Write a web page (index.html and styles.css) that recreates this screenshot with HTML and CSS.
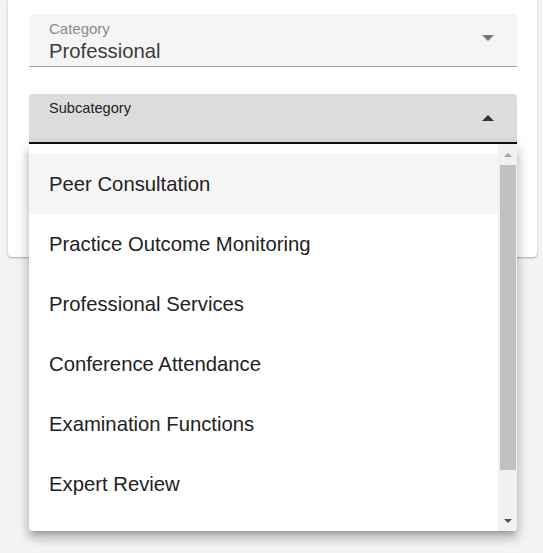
FILE: index.html
```html
<!DOCTYPE html>
<html>
<head>
<meta charset="utf-8">
<link rel="stylesheet" href="styles.css">
</head>
<body>
<div class="card">
  <div class="field field-filled">
    <div class="field-text">
      <div class="label">Category</div>
      <div class="value">Professional</div>
    </div>
    <span class="arrow arrow-down"></span>
  </div>
  <div class="field field-open">
    <div class="field-text">
      <div class="label label-open">Subcategory</div>
    </div>
    <span class="arrow arrow-up"></span>
    <div class="menu">
      <ul class="list">
        <li class="item item-active">Peer Consultation</li>
        <li class="item">Practice Outcome Monitoring</li>
        <li class="item">Professional Services</li>
        <li class="item">Conference Attendance</li>
        <li class="item">Examination Functions</li>
        <li class="item">Expert Review</li>
      </ul>
      <div class="scrollbar">
        <span class="sb-btn"><span class="sb-up"></span></span>
        <div class="sb-thumb"></div>
        <div class="sb-rest"></div>
        <span class="sb-btn"><span class="sb-down"></span></span>
      </div>
    </div>
  </div>
</div>
</body>
</html>
```
FILE: styles.css
```css
html, body {
  margin: 0;
  padding: 0;
}
body {
  background: #f4f4f4;
  font-family: "Liberation Sans", Arial, sans-serif;
  height: 553px;
  overflow: hidden;
}
.card {
  margin: 0 6px 0 8px;
  height: 257px;
  box-sizing: border-box;
  background: #fff;
  border-radius: 0 0 4px 4px;
  box-shadow: 0 1px 3px rgba(0,0,0,0.2), 0 1px 1px rgba(0,0,0,0.12);
  padding: 14px 20px 0 21px;
  display: flex;
  flex-direction: column;
  gap: 27px;
}
.field {
  position: relative;
  display: flex;
  align-items: flex-start;
  border-radius: 4px 4px 0 0;
  padding: 0 20px;
  box-sizing: border-box;
}
.field-filled {
  background: #f5f5f5;
  height: 53px;
  border-bottom: 1px solid #a2a2a2;
}
.field-open {
  background: #dcdcdc;
  height: 50px;
  border-bottom: 2px solid #111;
}
.field-text {
  flex: 1;
}
.label {
  font-size: 15px;
  color: #8a8a8a;
  margin-top: 6px;
  line-height: 17px;
}
.label-open {
  color: #222;
  font-size: 14.6px;
  margin-top: 6px;
}
.value {
  font-size: 20.3px;
  color: #3c3c3c;
  line-height: 22px;
  margin-top: 3px;
}
.arrow {
  width: 0;
  height: 0;
  border-left: 6px solid transparent;
  border-right: 6px solid transparent;
  margin-right: 3px;
}
.arrow-down {
  border-top: 6px solid #767676;
  margin-top: 21px;
}
.arrow-up {
  border-bottom: 6px solid #333;
  margin-top: 21px;
}
.menu {
  position: absolute;
  left: 0;
  right: 0;
  top: 50px;
  height: 387px;
  background: #fff;
  border-radius: 0 0 4px 4px;
  box-shadow: 0 5px 5px -3px rgba(0,0,0,0.2), 0 8px 10px 1px rgba(0,0,0,0.14), 0 3px 14px 2px rgba(0,0,0,0.12);
  display: flex;
  overflow: hidden;
  z-index: 5;
}
.list {
  list-style: none;
  margin: 0;
  padding: 10px 0 0;
  flex: 1;
}
.item {
  height: 60px;
  display: flex;
  align-items: center;
  padding-left: 20px;
  font-size: 20.3px;
  color: #222;
}
.item-active {
  background: #f5f5f5;
}
.scrollbar {
  width: 19px;
  background: #f1f1f1;
  display: flex;
  flex-direction: column;
  align-items: stretch;
}
.sb-btn {
  height: 18px;
  display: flex;
  align-items: center;
  justify-content: center;
}
.sb-up {
  width: 0;
  height: 0;
  border-left: 4px solid transparent;
  border-right: 4px solid transparent;
  border-bottom: 4px solid #a3a3a3;
  margin-top: 4px;
}
.sb-down {
  width: 0;
  height: 0;
  border-left: 4px solid transparent;
  border-right: 4px solid transparent;
  border-top: 4px solid #505050;
  margin-bottom: 2px;
}
.sb-thumb {
  height: 305px;
  background: #c1c1c1;
  margin: 3px 1px 0 2px;
}
.sb-rest {
  flex: 1;
}
```
